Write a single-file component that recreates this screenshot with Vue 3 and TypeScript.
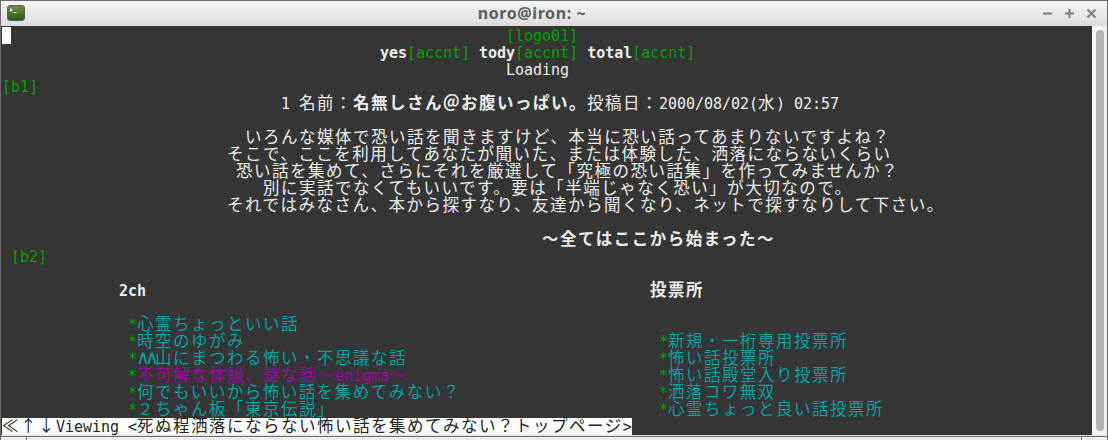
<script setup lang="ts">
type Tone = 'plain' | 'bold' | 'green' | 'teal' | 'magenta' | 'cursor' | 'caret'
type Cell = { text: string; tone: Tone; wide: boolean }
type Source = [string, Tone]

const isWide = (ch: string): boolean => /[\u2190-\u2193\u226a\u3000-\u9fff\uff00-\uffef]/.test(ch)

function cells(source: Source[]): Cell[] {
  const out: Cell[] = []
  for (const [text, tone] of source) {
    for (const ch of text) {
      const wide = isWide(ch)
      const last = out[out.length - 1]
      if (last && last.tone === tone && last.wide === wide) last.text += ch
      else out.push({ text: ch, tone, wide })
    }
  }
  return out
}

const pad = (n: number): Source => [' '.repeat(n), 'plain']
const star = (n: number, label: string, tone: Tone = 'teal'): Source[] => [pad(n), ['*', 'green'], [label, tone]]

const screen: Source[][] = [
  [['\u00a0', 'cursor'], pad(55), ['[logo01]', 'green']],
  [pad(42), ['yes', 'bold'], ['[accnt]', 'green'], pad(1), ['tody', 'bold'], ['[accnt]', 'green'], pad(1), ['total', 'bold'], ['[accnt]', 'green']],
  [pad(56), ['Loading', 'plain']],
  [['[b1]', 'green']],
  [pad(31), ['1 名前：', 'plain'], ['名無しさん＠お腹いっぱい。', 'bold'], ['投稿日：2000/08/02(水) 02:57', 'plain']],
  [],
  [pad(27), ['いろんな媒体で恐い話を聞きますけど、本当に恐い話ってあまりないですよね？', 'plain']],
  [pad(25), ['そこで、ここを利用してあなたが聞いた、または体験した、洒落にならないくらい', 'plain']],
  [pad(26), ['恐い話を集めて、さらにそれを厳選して「究極の恐い話集」を作ってみませんか？', 'plain']],
  [pad(29), ['別に実話でなくてもいいです。要は「半端じゃなく恐い」が大切なので。', 'plain']],
  [pad(25), ['それではみなさん、本から探すなり、友達から聞くなり、ネットで探すなりして下さい。', 'plain']],
  [],
  [pad(60), ['〜全てはここから始まった〜', 'bold']],
  [pad(1), ['[b2]', 'green']],
  [],
  [pad(13), ['2ch', 'bold'], pad(56), ['投票所', 'bold']],
  [],
  star(14, '心霊ちょっといい話'),
  [...star(14, '時空のゆがみ'), pad(46), ['*', 'green'], ['新規・一桁専用投票所', 'teal']],
  [pad(14), ['*', 'green'], ['∧∧', 'caret'], ['山にまつわる怖い・不思議な話', 'teal'], pad(28), ['*', 'green'], ['怖い話投票所', 'teal']],
  [...star(14, '不可解な体験、謎な話〜enigma〜', 'magenta'), pad(28), ['*', 'green'], ['怖い話殿堂入り投票所', 'teal']],
  [...star(14, '何でもいいから怖い話を集めてみない？'), pad(22), ['*', 'green'], ['洒落コワ無双', 'teal']],
  [...star(14, '２ちゃん板「東京伝説」'), pad(36), ['*', 'green'], ['心霊ちょっと良い話投票所', 'teal']],
]

const rows = screen.map(cells)
const status = cells([['≪↑↓Viewing <死ぬ程洒落にならない怖い話を集めてみない？トップページ>', 'plain']])
</script>

<template>
  <div class="window">
    <header class="titlebar">
      <svg class="app-icon" width="18" height="16" viewBox="0 0 18 16">
        <defs>
          <linearGradient id="tile" x1="0" y1="0" x2="0" y2="1">
            <stop offset="0" stop-color="#6f8f4c" />
            <stop offset="0.55" stop-color="#4a7428" />
            <stop offset="1" stop-color="#2f4f22" />
          </linearGradient>
        </defs>
        <rect x="0.5" y="0.5" width="17" height="15" rx="2.5" fill="url(#tile)" stroke="#55614f" />
        <path d="M3 3 L6 5 L3 7 Z" fill="#f2f6ea" />
        <path d="M6.5 7.5 H9.5" stroke="#dce8c8" stroke-width="1" />
      </svg>
      <span class="title">noro@iron: ~</span>
      <div class="controls">
        <svg width="11" height="11" viewBox="0 0 11 11"><path d="M1 5.5 H10" /></svg>
        <svg width="11" height="11" viewBox="0 0 11 11"><path d="M1 5.5 H10 M5.5 1 V10" /></svg>
        <svg width="11" height="11" viewBox="0 0 11 11"><path d="M1.5 1.5 L9.5 9.5 M9.5 1.5 L1.5 9.5" /></svg>
      </div>
    </header>

    <div class="body">
      <main class="terminal">
        <div v-for="(row, r) in rows" :key="r" class="row">
          <span v-for="(cell, c) in row" :key="c" :class="[cell.tone, { wide: cell.wide }]">{{ cell.text }}</span>
        </div>
        <div class="row status">
          <span v-for="(cell, c) in status" :key="c" :class="{ wide: cell.wide }">{{ cell.text }}</span>
        </div>
      </main>
      <aside class="scrollbar"><div class="thumb"></div></aside>
    </div>

    <footer class="frame">
      <i class="tick"></i>
      <i class="tick"></i>
    </footer>
  </div>
</template>

<style>
html,
body {
  margin: 0;
  background: #ededed;
  overflow: hidden;
}
</style>

<style scoped>
.window {
  width: 1108px;
  height: 440px;
  box-sizing: border-box;
  display: flex;
  flex-direction: column;
  border-top: 1px solid #6a6a6a;
  border-left: 1px solid #6a6a6a;
  border-right: 1px solid #6a6a6a;
  background: #ededed;
  overflow: hidden;
}

.titlebar {
  height: 25px;
  flex: none;
  display: flex;
  align-items: center;
  box-sizing: border-box;
  padding: 0 10px 1px 6px;
  background: linear-gradient(#f6f6f6, #dcdcdc);
}

.app-icon {
  flex: none;
}

.title {
  flex: 1;
  padding-right: 3px;
  text-align: center;
  font: 700 16px "Noto Sans", sans-serif;
  letter-spacing: 0.6px;
  color: #5c5c5c;
}

.controls {
  display: flex;
  gap: 11px;
  padding-top: 1px;
}

.controls path {
  stroke: #7c7c7c;
  stroke-width: 2;
  fill: none;
}

.body {
  flex: 1;
  min-height: 0;
  display: flex;
}

.terminal {
  flex: 1;
  min-width: 0;
  box-sizing: border-box;
  padding: 1px 0 0 1px;
  background: #353535;
  color: #eeeeee;
  font-family: "DejaVu Sans Mono", "Noto Sans CJK JP", monospace;
  font-size: 15px;
  letter-spacing: -0.03px;
  overflow: hidden;
}

.row {
  height: 17px;
  line-height: 19px;
  white-space: pre;
}

.wide {
  font-family: "Noto Sans CJK JP", "DejaVu Sans", sans-serif;
  font-size: 16.5px;
  letter-spacing: 1.5px;
  line-height: 0;
}

.bold {
  font-weight: 700;
}

.green {
  color: #00a000;
}

.teal {
  color: #00a0a0;
}

.caret {
  color: #00a0a0;
  font-size: 20px;
  line-height: 0;
  letter-spacing: -3.04px;
}

.magenta {
  color: #a000a0;
}

.cursor {
  display: inline-block;
  width: 9px;
  height: 17px;
  vertical-align: top;
  background: #ffffff;
}

.status {
  width: fit-content;
  background: #ffffff;
  color: #222222;
}

.scrollbar {
  width: 15px;
  flex: none;
  box-sizing: border-box;
  padding: 4px 3px 4px 4px;
  background: linear-gradient(90deg, #fbfbfb, #ededed);
}

.thumb {
  height: 100%;
  border-radius: 4px;
  background: #b2b2b2;
}

.frame {
  height: 4px;
  flex: none;
  display: flex;
  justify-content: space-between;
  padding: 0 25px;
  border-top: 1px solid #dddddd;
  box-shadow: inset 0 1px 0 #6f6f6f;
  background: #eeeeee;
}

.tick {
  width: 1px;
  background: #6f6f6f;
}
</style>
